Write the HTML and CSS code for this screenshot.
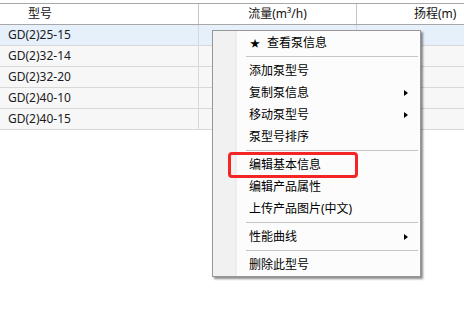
FILE: index.html
```html
<!DOCTYPE html>
<html lang="zh-CN">
<head>
<meta charset="utf-8">
<title>泵型号</title>
<link rel="stylesheet" href="styles.css">
</head>
<body>
<div class="grid">
  <div class="row head">
    <div class="cell c1 h1">型号</div>
    <div class="cell c2 h2">流量(m³/h)</div>
    <div class="cell c3 h3">扬程(m)</div>
  </div>
  <div class="row sel">
    <div class="cell c1">GD(2)25-15</div>
    <div class="cell c2"></div>
    <div class="cell c3"></div>
  </div>
  <div class="row">
    <div class="cell c1">GD(2)32-14</div>
    <div class="cell c2"></div>
    <div class="cell c3"></div>
  </div>
  <div class="row">
    <div class="cell c1">GD(2)32-20</div>
    <div class="cell c2"></div>
    <div class="cell c3"></div>
  </div>
  <div class="row">
    <div class="cell c1">GD(2)40-10</div>
    <div class="cell c2"></div>
    <div class="cell c3"></div>
  </div>
  <div class="row">
    <div class="cell c1">GD(2)40-15</div>
    <div class="cell c2"></div>
    <div class="cell c3"></div>
  </div>
</div>

<div class="menu">
  <div class="item"><span class="star">★</span>查看泵信息</div>
  <div class="sep"></div>
  <div class="item">添加泵型号</div>
  <div class="item sub">复制泵信息</div>
  <div class="item sub">移动泵型号</div>
  <div class="item">泵型号排序</div>
  <div class="sep"></div>
  <div class="item">编辑基本信息</div>
  <div class="item">编辑产品属性</div>
  <div class="item">上传产品图片(中文)</div>
  <div class="sep"></div>
  <div class="item sub">性能曲线</div>
  <div class="sep"></div>
  <div class="item">删除此型号</div>
</div>
<div class="highlight"></div>
</body>
</html>
```

FILE: styles.css
```css
html, body {
  margin: 0;
  padding: 0;
  background: #ffffff;
}
body {
  width: 464px;
  height: 316px;
  overflow: hidden;
  position: relative;
  font-family: "Noto Sans", "Noto Sans CJK SC", sans-serif;
  font-size: 12px;
  color: #1b1b1b;
}
.grid {
  padding-top: 3px;
}
.row {
  display: flex;
  height: 20px;
  border-bottom: 1px solid #d8d8d8;
  background: #f7f7f7;
}
.row.head {
  background: #ffffff;
  border-top: 1px solid #a8a8a8;
  border-bottom: 1px solid #a8a8a8;
}
.row.sel {
  background: #e5f0fb;
}
.cell {
  line-height: 20px;
  white-space: nowrap;
  box-sizing: border-box;
}
.c1 {
  width: 199px;
  padding-left: 8px;
  border-right: 1px solid #d8d8d8;
}
.c2 {
  width: 158px;
  border-right: 1px solid #d8d8d8;
}
.c3 {
  flex: 1;
}
.head .cell {
  color: #111111;
  border-right-color: #c4c4c4;
}
.h1 {
  padding-left: 28px;
}
.h2 {
  text-align: center;
}
.h3 {
  padding-left: 57px;
}

.menu {
  position: absolute;
  left: 212px;
  top: 30px;
  width: 209px;
  box-sizing: border-box;
  border: 1px solid #979797;
  padding: 1px 1px 0 1px;
  background:
    linear-gradient(to right, #f1f1f1 0, #f1f1f1 22px, #e4e4e4 23px, #fcfcfc 24px, #fcfcfc 100%);
  box-shadow: 2px 2px 2px rgba(0, 0, 0, 0.45);
  color: #000000;
}
.item {
  position: relative;
  height: 22px;
  line-height: 22px;
  padding-left: 35px;
  white-space: nowrap;
}
.star {
  display: inline-block;
  width: 17px;
  font-size: 10px;
  margin-left: 1px;
}
.sub::after {
  content: "";
  position: absolute;
  right: 11px;
  top: 8px;
  border-top: 3.5px solid transparent;
  border-bottom: 3.5px solid transparent;
  border-left: 4px solid #000000;
}
.sep {
  height: 1px;
  margin: 2px 1px 3px 32px;
  background: #c6c6c6;
}
.highlight {
  position: absolute;
  left: 228px;
  top: 152px;
  width: 130px;
  height: 26px;
  box-sizing: border-box;
  border: 3px solid #f42525;
  border-radius: 4px;
}
```
